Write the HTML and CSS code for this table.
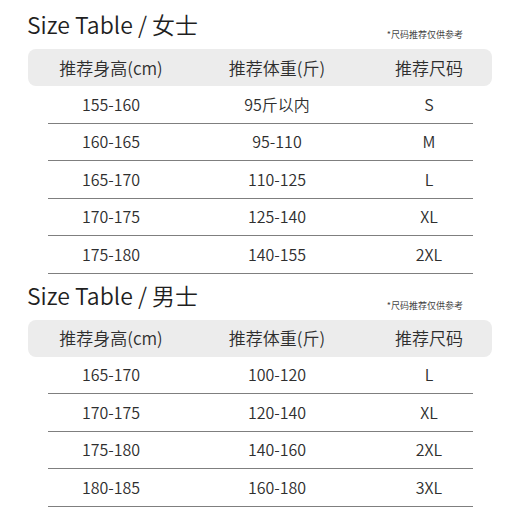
FILE: index.html
```html
<!DOCTYPE html>
<html lang="zh">
<head>
<meta charset="utf-8">
<title>Size Table</title>
<link rel="stylesheet" href="styles.css">
</head>
<body>
<div class="page">
  <section class="size-section">
    <div class="title-row">
      <h2 class="title">Size Table / 女士</h2>
      <span class="note">*尺码推荐仅供参考</span>
    </div>
    <div class="table">
      <div class="thead">
        <span class="c1">推荐身高(cm)</span><span class="c2">推荐体重(斤)</span><span class="c3">推荐尺码</span>
      </div>
      <div class="row"><span class="c1">155-160</span><span class="c2">95斤以内</span><span class="c3">S</span></div>
      <div class="row"><span class="c1">160-165</span><span class="c2">95-110</span><span class="c3">M</span></div>
      <div class="row"><span class="c1">165-170</span><span class="c2">110-125</span><span class="c3">L</span></div>
      <div class="row"><span class="c1">170-175</span><span class="c2">125-140</span><span class="c3">XL</span></div>
      <div class="row"><span class="c1">175-180</span><span class="c2">140-155</span><span class="c3">2XL</span></div>
    </div>
  </section>
  <section class="size-section second">
    <div class="title-row">
      <h2 class="title">Size Table / 男士</h2>
      <span class="note">*尺码推荐仅供参考</span>
    </div>
    <div class="table">
      <div class="thead">
        <span class="c1">推荐身高(cm)</span><span class="c2">推荐体重(斤)</span><span class="c3">推荐尺码</span>
      </div>
      <div class="row"><span class="c1">165-170</span><span class="c2">100-120</span><span class="c3">L</span></div>
      <div class="row"><span class="c1">170-175</span><span class="c2">120-140</span><span class="c3">XL</span></div>
      <div class="row"><span class="c1">175-180</span><span class="c2">140-160</span><span class="c3">2XL</span></div>
      <div class="row"><span class="c1">180-185</span><span class="c2">160-180</span><span class="c3">3XL</span></div>
    </div>
  </section>
</div>
</body>
</html>
```
FILE: styles.css
```css
html, body {
  margin: 0;
  padding: 0;
  background: #ffffff;
}

body {
  font-family: "Noto Sans CJK SC", "Noto Sans", sans-serif;
  color: #333333;
}

.page {
  padding: 9px 28px 0 28px;
}

.size-section.second {
  margin-top: 6px;
}

.title-row {
  display: flex;
  justify-content: space-between;
  align-items: flex-end;
  padding-right: 29px;
}

.title {
  margin: 0 0 0 -1px;
  font-size: 23px;
  line-height: 30px;
  font-weight: 350;
  color: #1f1f1f;
}

.note {
  font-size: 9px;
  line-height: 12px;
  font-weight: 400;
  color: #444444;
  margin-bottom: -2px;
}

.table {
  margin-top: 10px;
}

.thead,
.row {
  display: grid;
  grid-template-columns: 126px 206px 1fr;
  align-items: center;
  text-align: center;
}

.thead {
  height: 37px;
  padding: 0 19px 0 20px;
  background: #ececec;
  border-radius: 8px;
  font-size: 17px;
  line-height: 20px;
  font-weight: 350;
  color: #2e2e2e;
}

.row {
  box-sizing: border-box;
  height: 37.5px;
  margin: 0 19px 0 20px;
  border-bottom: 1px solid #7f7f7f;
  font-size: 16px;
  line-height: 20px;
  font-weight: 350;
  color: #2e2e2e;
  padding-bottom: 1px;
}

.c3 {
  padding-left: 5px;
}
```
